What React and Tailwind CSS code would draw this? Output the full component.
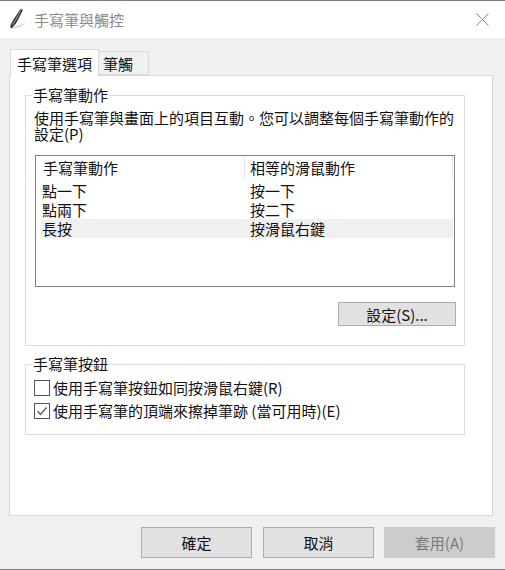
const cjk = { fontFamily: '"Noto Sans CJK TC", "Liberation Sans", sans-serif' };

function PenIcon() {
    return (
        <svg width="20" height="22" viewBox="0 0 20 22" className="block">
            <path d="M2 20.5 L11 17 L18 15 L10 19 L3 21 Z" fill="#c9cbce" />
            <path d="M11.5 1 L14 2 L7 15.5 L3.5 19.5 L1.5 20.5 L1.5 17 L4.5 11.5 Z" fill="#33373b" />
            <path d="M11.8 2.5 L6 13 L3.5 17" stroke="#9aa0a5" strokeWidth="1" fill="none" />
        </svg>
    );
}

function Btn({ children, disabled, className = "" }) {
    return (
        <button
            className={`flex items-center justify-center border text-[15px] leading-none ${disabled ? "border-[#cccccc] bg-[#cccccc] text-[#7a7a7a]" : "border-[#adadad] bg-[#e1e1e1] text-[#111111]"} ${className}`}
        >
            {children}
        </button>
    );
}

function Check({ checked, children }) {
    return (
        <div className="ml-[-1px] flex h-[23px] items-center gap-[3px] text-[15px] leading-none text-[#111111]">
            <span className="flex h-[16px] w-[16px] shrink-0 items-center justify-center border border-[#555555] bg-white">
                {checked && (
                    <svg width="14" height="14" viewBox="0 0 14 14">
                        <path d="M2.5 7 L5.5 10.5 L11.5 3.5" stroke="#555555" strokeWidth="1.2" fill="none" />
                    </svg>
                )}
            </span>
            <span>{children}</span>
        </div>
    );
}

function Group({ title, className = "", children }) {
    return (
        <div className={`relative w-[440px] border border-[#dcdcdc] px-[9px] ${className}`}>
            <span className="absolute left-[6px] top-[-10px] bg-white px-px text-[15px] leading-[18px] text-[#111111]">
                {title}
            </span>
            {children}
        </div>
    );
}

function Row({ left, right, selected }) {
    return (
        <div className={`flex h-[19px] items-center text-[15px] leading-none text-[#111111] ${selected ? "bg-[#f0f0f0]" : ""}`}>
            <span className="w-[209px] pl-[1px]">{left}</span>
            <span>{right}</span>
        </div>
    );
}

export default function App() {
    return (
        <div style={cjk} className="flex h-[570px] w-[505px] flex-col overflow-hidden border-y border-[#7f7f7f] bg-[#f0f0f0]">
            <div className="flex h-[37px] shrink-0 items-center bg-white pb-[1px] pl-[9px] pr-[16px]">
                <PenIcon />
                <span className="ml-[5px] text-[15px] leading-none text-[#8c8c8c]">手寫筆與觸控</span>
                <svg width="13" height="13" viewBox="0 0 13 13" className="ml-auto">
                    <path d="M0.5 0.5 L12.5 12.5 M12.5 0.5 L0.5 12.5" stroke="#8a8a8a" strokeWidth="1" />
                </svg>
            </div>

            <div className="ml-[10px] mt-[10px] flex h-[27px] items-end">
                <div className="relative z-10 mb-[-1px] flex h-[27px] w-[89px] items-center justify-center border border-b-0 border-[#d9d9d9] bg-white text-[15px] leading-none text-[#111111]">
                    手寫筆選項
                </div>
                <div className="flex h-[24px] w-[50px] items-center border border-l-0 border-[#d9d9d9] pl-[4px] text-[15px] leading-none text-[#111111]">
                    筆觸
                </div>
            </div>

            <div className="ml-[9px] h-[441px] w-[484px] border border-[#d9d9d9] bg-white pl-[15px] pt-[19px]">
                <Group title="手寫筆動作" className="h-[251px]">
                    <p className="ml-[-1px] mt-[14px] w-[425px] text-[15px] leading-[16px] text-[#111111]">
                        使用手寫筆與畫面上的項目互動。您可以調整每個手寫筆動作的設定(P)
                    </p>
                    <div className="mt-[13px] h-[132px] w-[420px] border border-[#828282] bg-white pl-[5px] pr-px">
                        <div className="mb-[2px] flex h-[23px] items-center text-[15px] leading-none text-[#111111]">
                            <span className="w-[204px] border-r border-[#e5e5e5] pl-[2px] leading-[23px]">手寫筆動作</span>
                            <span className="flex-1 border-r border-[#e5e5e5] pl-[5px] leading-[23px]">相等的滑鼠動作</span>
                        </div>
                        <Row left="點一下" right="按一下" />
                        <Row left="點兩下" right="按二下" />
                        <Row left="長按" right="按滑鼠右鍵" selected />
                    </div>
                    <div className="mt-[15px] flex justify-end">
                        <Btn className="mr-[-1px] h-[24px] w-[118px]">設定(S)...</Btn>
                    </div>
                </Group>

                <Group title="手寫筆按鈕" className="mt-[18px] h-[71px] pt-[11px]">
                    <Check>使用手寫筆按鈕如同按滑鼠右鍵(R)</Check>
                    <Check checked>使用手寫筆的頂端來擦掉筆跡 (當可用時)(E)</Check>
                </Group>
            </div>

            <div className="ml-[141px] mt-[11px] flex">
                <Btn className="h-[31px] w-[111px]">確定</Btn>
                <Btn className="ml-[11px] h-[31px] w-[111px]">取消</Btn>
                <Btn disabled className="ml-[10px] h-[31px] w-[111px]">套用(A)</Btn>
            </div>
        </div>
    );
}
